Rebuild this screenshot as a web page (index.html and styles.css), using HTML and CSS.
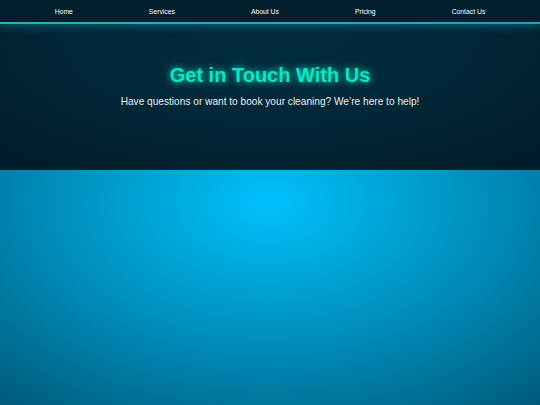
FILE: index.html
```html
<!DOCTYPE html>
<html lang="en">
<head>
<meta charset="utf-8">
<title>Contact Us</title>
<link rel="stylesheet" href="styles.css">
</head>
<body>
<header class="site-header">
  <nav class="main-nav">
    <a href="#" class="nav-link">Home</a>
    <a href="#" class="nav-link">Services</a>
    <a href="#" class="nav-link">About Us</a>
    <a href="#" class="nav-link">Pricing</a>
    <a href="#" class="nav-link">Contact Us</a>
  </nav>
</header>
<section class="hero">
  <h1 class="hero-title">Get in Touch With Us</h1>
  <p class="hero-sub">Have questions or want to book your cleaning? We’re here to help!</p>
</section>
<main class="content"></main>
</body>
</html>
```
FILE: styles.css
```css
html, body {
  margin: 0;
  padding: 0;
  height: 100%;
}
body {
  font-family: "Liberation Sans", Arial, sans-serif;
  background: #005a7a;
  display: flex;
  flex-direction: column;
  overflow: hidden;
}
.site-header {
  position: relative;
  z-index: 2;
  background: #021f2f;
  border-bottom: 2px solid transparent;
  border-image: linear-gradient(90deg, #2cb3ad, #2a9cc4) 1;
  box-shadow: 0 2px 8px rgba(0, 200, 220, 0.35);
}
.main-nav {
  height: 22px;
  display: flex;
  justify-content: center;
  align-items: center;
  gap: 76px;
}
.nav-link {
  color: #ffffff;
  text-decoration: none;
  font-size: 6.8px;
  padding-top: 1px;
}
.hero {
  height: 106px;
  padding-top: 40px;
  background: radial-gradient(ellipse 70% 110% at 50% 10%, #032c3f 0%, #022738 55%, #011d2b 100%);
  text-align: center;
}
.hero-title {
  margin: 0;
  font-size: 20px;
  line-height: 23px;
  font-weight: bold;
  color: #14e2c4;
  text-shadow: 0 0 6px rgba(0, 255, 210, 0.75), 0 0 12px rgba(0, 255, 210, 0.35);
}
.hero-sub {
  margin: 9px 0 0;
  font-size: 10.15px;
  color: #e6eef2;
}
.content {
  flex: 1;
  background: radial-gradient(ellipse 78% 115% at 50% 14%, #00c0ff 0%, #00a8da 25%, #008ab8 55%, #006f95 80%, #005878 100%);
}
```
